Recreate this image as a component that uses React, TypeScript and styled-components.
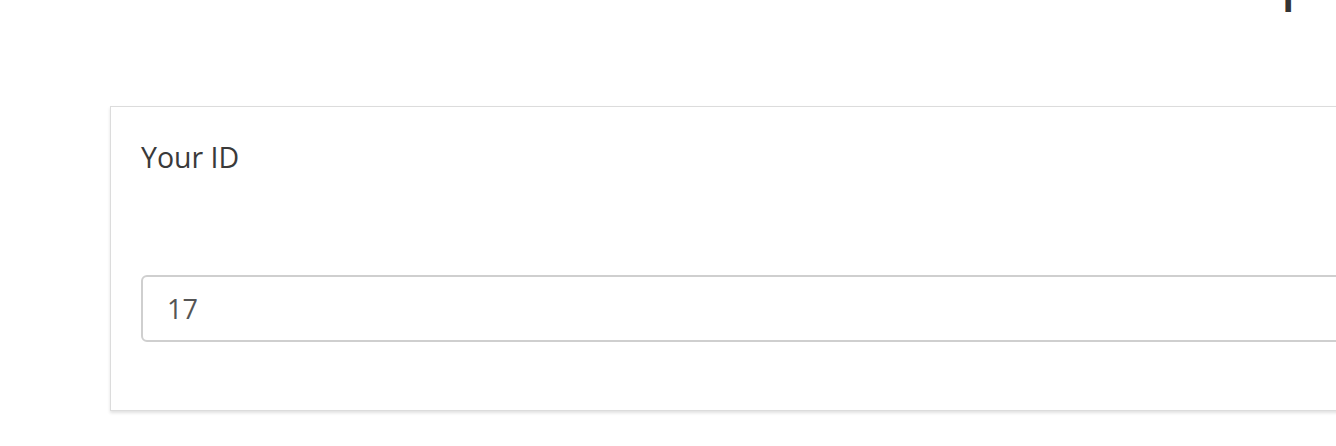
import React from "react";
import styled, { createGlobalStyle } from "styled-components";

const Global = createGlobalStyle`
  html, body { margin: 0; padding: 0; background: #fff; overflow: hidden; }
  body { font-family: "Open Sans", "Noto Sans", sans-serif; }
`;

const Page = styled.div`
  width: 1336px;
  height: 446px;
  overflow: hidden;
  display: flex;
  flex-direction: column;
`;

const TopStrip = styled.div`
  height: 14px;
  overflow: hidden;
  display: flex;
  justify-content: flex-end;
  align-items: flex-start;
  padding-right: 41px;
`;

const TopGlyph = styled.span`
  font-size: 48px;
  line-height: 48px;
  margin-top: -42px;
  color: #333;
  font-weight: 600;
`;

const Card = styled.section`
  margin: 92px 0 0 110px;
  width: 1400px;
  box-sizing: border-box;
  border: 1px solid #dcdcdc;
  box-shadow: 0 2px 3px rgba(0, 0, 0, 0.12);
  background: #fff;
  padding: 30px 30px 68px 30px;
  display: flex;
  flex-direction: column;
`;

const Label = styled.label`
  font-size: 28.5px;
  line-height: 40px;
  color: #3a3a3a;
  margin-bottom: 98px;
`;

const Input = styled.input`
  height: 67px;
  box-sizing: border-box;
  border: 2px solid #cfcfcf;
  border-radius: 6px;
  padding: 0 24px;
  font-family: inherit;
  font-size: 27px;
  color: #555;
  background: #fff;
  outline: none;
`;

export default function App() {
  return (
    <>
      <Global />
      <Page>
        <TopStrip>
          <TopGlyph>q</TopGlyph>
        </TopStrip>
        <Card>
          <Label>Your ID</Label>
          <Input defaultValue="17" />
        </Card>
      </Page>
    </>
  );
}
